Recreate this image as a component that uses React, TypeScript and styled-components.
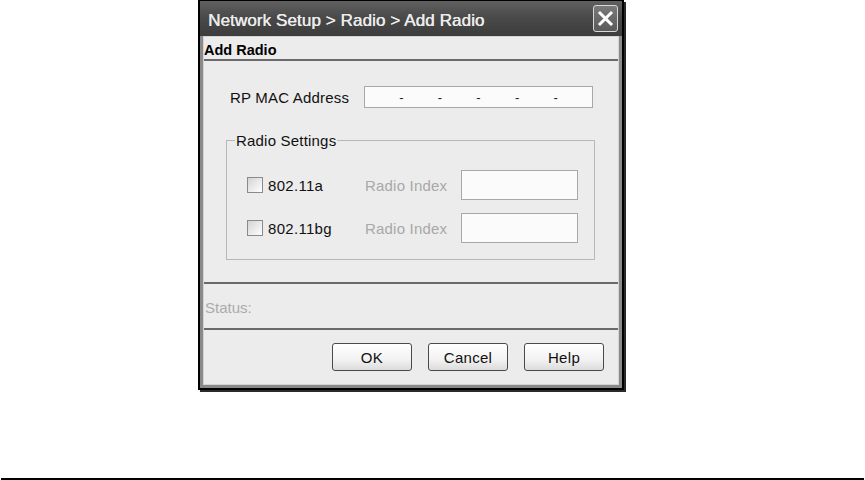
import React from "react";
import styled, { createGlobalStyle } from "styled-components";

const Global = createGlobalStyle`
  html, body { margin: 0; padding: 0; background: #ffffff; }
  body { font-family: "Liberation Sans", Arial, sans-serif; }
  * { box-sizing: border-box; }
`;

const Page = styled.div`
  height: 480px;
  display: flex;
  flex-direction: column;
`;

const Window = styled.div`
  margin-left: 198px;
  width: 426px;
  height: 390px;
  border: 2px solid #000;
  border-top-width: 1px;
  background: #000;
  box-shadow: 2px 2px 0 #2a2a2a;
  display: flex;
  flex-direction: column;
`;

const TitleBar = styled.div`
  height: 35px;
  background: linear-gradient(#606060, #4a4a4a 45%, #3c3c3c);
  display: flex;
  align-items: center;
  justify-content: space-between;
  padding: 0 4px 0 8px;
`;

const Title = styled.span`
  margin-top: 4px;
  color: #ececec;
  font-family: "Liberation Sans", Arial, sans-serif;
  font-size: 17px;
  letter-spacing: 0.1px;
  text-shadow: 0.4px 0 0 #ececec;
`;

const CloseButton = styled.div`
  width: 25px;
  height: 27px;
  border: 1px solid #d8d8d8;
  border-radius: 3px;
  background: linear-gradient(#7a7a7a, #5a5a5a);
  display: flex;
  align-items: center;
  justify-content: center;
`;

const Frame = styled.div`
  flex: 1;
  background: #8a8a8a;
  padding: 0 3px 3px 3px;
  display: flex;
  flex-direction: column;
`;

const Panel = styled.div`
  flex: 1;
  background: #ececec;
  border: 1px solid #d4d4d4;
  display: flex;
  flex-direction: column;
`;

const Header = styled.div`
  height: 24px;
  display: flex;
  align-items: center;
  padding: 3px 0 0 0;
  font-weight: bold;
  font-size: 14.5px;
  color: #000;
  border-bottom: 2px solid #6a6a6a;
`;

const Content = styled.div`
  height: 223px;
  padding: 25px 0 0 22px;
  border-bottom: 2px solid #6a6a6a;
`;

const Row = styled.div`
  display: flex;
  align-items: center;
  height: 22px;
`;

const Label = styled.span<{ $muted?: boolean; $width?: number }>`
  font-size: 15px;
  letter-spacing: 0.2px;
  color: ${(p) => (p.$muted ? "#a8a8a8" : "#111")};
  width: ${(p) => (p.$width ? `${p.$width}px` : "auto")};
`;

const MacLabel = styled(Label)`
  padding-left: 4px;
`;

const MacField = styled.div`
  width: 229px;
  height: 22px;
  background: #fbfbfb;
  border: 1px solid #a8a8a8;
  display: flex;
  justify-content: space-around;
  align-items: center;
  padding: 0 17px 0 17px;
  font-size: 13px;
  color: #222;
`;

const Fieldset = styled.fieldset`
  margin: 24px 0 0 0;
  width: 369px;
  height: 128px;
  border: 1px solid #b8b8b8;
  padding: 21px 16px 0 20px;
  display: grid;
  grid-template-columns: 118px 96px 117px;
  grid-auto-rows: 30px;
  row-gap: 13px;
  align-items: center;
`;

const Legend = styled.legend`
  margin-left: -12px;
  padding: 0 1px;
  font-size: 15px;
  letter-spacing: 0.2px;
  color: #111;
`;

const CheckLabel = styled.label`
  display: flex;
  align-items: center;
  gap: 5px;
  font-size: 15px;
  letter-spacing: 0.3px;
  color: #111;
`;

const Box = styled.span`
  width: 16px;
  height: 16px;
  border: 1px solid #8a8a8a;
  background: linear-gradient(135deg, #d4d4d4, #ffffff);
`;

const IndexField = styled.div`
  width: 117px;
  height: 30px;
  background: #fbfbfb;
  border: 1px solid #a8a8a8;
`;

const StatusRow = styled.div`
  height: 46px;
  display: flex;
  align-items: center;
  padding: 3px 0 0 1px;
  font-size: 15px;
  color: #ababab;
  border-bottom: 2px solid #6a6a6a;
`;

const ButtonRow = styled.div`
  flex: 1;
  display: flex;
  justify-content: flex-end;
  align-items: flex-start;
  gap: 16px;
  padding: 13px 14px 0 0;
`;

const Button = styled.button`
  width: 80px;
  height: 28px;
  border: 1px solid #4a4a4a;
  border-radius: 3px;
  background: linear-gradient(#ffffff, #f2f2f2 60%, #dcdcdc);
  font-family: "Liberation Sans", Arial, sans-serif;
  font-size: 15px;
  letter-spacing: 0.3px;
  color: #111;
  padding: 0;
`;

const Spacer = styled.div`
  flex: 1;
`;

const BottomRule = styled.div`
  height: 2px;
  margin: 0 1px;
  background: #000;
`;

export default function App() {
  return (
    <>
      <Global />
      <Page>
        <Window>
          <TitleBar>
            <Title>Network Setup &gt; Radio &gt; Add Radio</Title>
            <CloseButton>
              <svg width="17" height="17" viewBox="0 0 17 17">
                <path d="M3 3 L14 14 M14 3 L3 14" stroke="#fff" strokeWidth="3" strokeLinecap="square" />
              </svg>
            </CloseButton>
          </TitleBar>
          <Frame>
            <Panel>
              <Header>Add Radio</Header>
              <Content>
                <Row>
                  <MacLabel $width={138}>RP MAC Address</MacLabel>
                  <MacField>
                    <span>-</span>
                    <span>-</span>
                    <span>-</span>
                    <span>-</span>
                    <span>-</span>
                  </MacField>
                </Row>
                <Fieldset>
                  <Legend>Radio Settings</Legend>
                  <CheckLabel>
                    <Box />
                    802.11a
                  </CheckLabel>
                  <Label $muted>Radio Index</Label>
                  <IndexField />
                  <CheckLabel>
                    <Box />
                    802.11bg
                  </CheckLabel>
                  <Label $muted>Radio Index</Label>
                  <IndexField />
                </Fieldset>
              </Content>
              <StatusRow>Status:</StatusRow>
              <ButtonRow>
                <Button>OK</Button>
                <Button>Cancel</Button>
                <Button>Help</Button>
              </ButtonRow>
            </Panel>
          </Frame>
        </Window>
        <Spacer />
        <BottomRule />
      </Page>
    </>
  );
}
